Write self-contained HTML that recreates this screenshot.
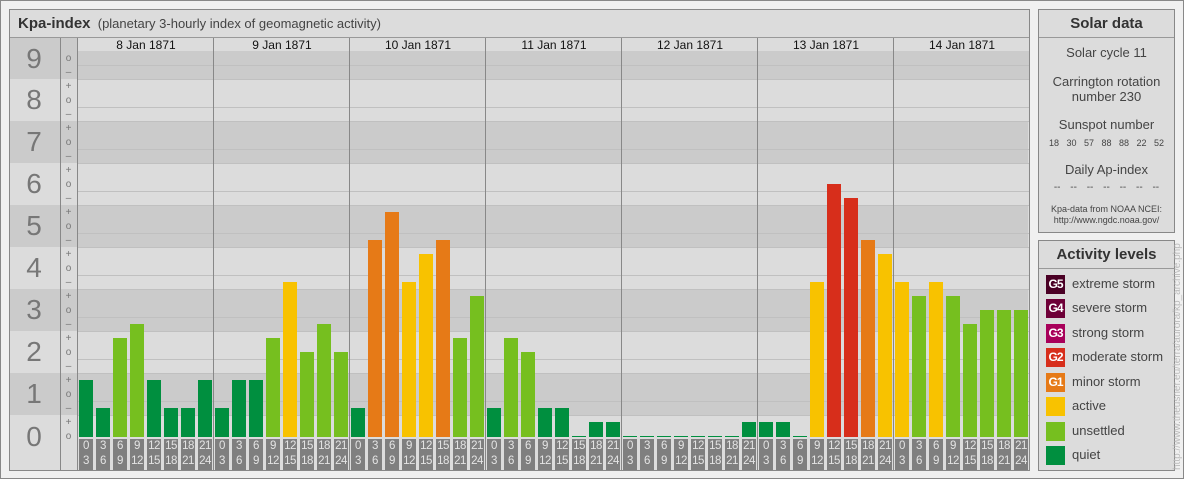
<!DOCTYPE html>
<html><head><meta charset="utf-8"><style>
*{margin:0;padding:0;box-sizing:border-box}
body{width:1184px;height:480px;background:#fff;font-family:"Liberation Sans",sans-serif;position:relative;overflow:hidden;color:#444}
div,span{position:absolute}
#outer{left:0;top:0;width:1184px;height:479px;border:1px solid #888;background:#f0f0f0}
#main{left:9px;top:9px;width:1021px;height:462px;border:1px solid #888;background:#dcdcdc;overflow:hidden}
#w{left:-1px;top:-1px;width:1021px;height:462px}
.t{left:8px;top:5px;font-size:13px;white-space:nowrap}
.band{left:0;width:1019px}
.dk{background:#cbcbcb}.lt{background:#dcdcdc}
.dig{left:0;width:50px;text-align:center;font-size:28px;color:#777;line-height:42px}
.sg{left:51px;width:17px;text-align:center;font-size:10px;color:#777;line-height:14px;height:14px}
.b{width:14px}
.q{background:#008f3f}.u{background:#76bf1f}.a{background:#f8c200}.g1{background:#e67a17}.g2{background:#d72e1b}
.lb{width:14px;height:31px;top:430px;background:#7f7f7f;color:#e4e4e4;font-size:11.5px;line-height:15px;text-align:center;letter-spacing:-0.5px}
.dh{top:29px;width:136px;text-align:center;font-size:12px;color:#111}
.vs{top:29px;width:1px;height:433px;background:#888}
.box{left:1038px;width:137px;border:1px solid #888;background:#dcdcdc}
.hd{left:0;width:135px;height:28px;border-bottom:1px solid #999;text-align:center;font-weight:bold;font-size:15px;line-height:28px;color:#333}
.c{left:0;width:135px;text-align:center;font-size:13px}
.sq{left:7px;width:19px;height:19px;color:#fff;font-size:12px;font-weight:bold;line-height:19px;text-align:center;letter-spacing:-1px}
.lt2{left:33px;font-size:13px;white-space:nowrap}
</style></head><body>
<div id="outer"></div>
<div id="main"><div id="w">
<div class="t" style="left:9px;top:6px"><b style="font-size:15px;color:#333">Kpa-index</b>&nbsp;&nbsp;(planetary 3-hourly index of geomagnetic activity)</div>
<div style="left:0;top:28px;width:1021px;height:1px;background:#999"></div>
<div class="band dk" style="top:29px;height:41px;width:1021px"></div>
<div class="band lt" style="top:70px;height:42px"></div>
<div class="band dk" style="top:112px;height:42px"></div>
<div class="band lt" style="top:154px;height:42px"></div>
<div class="band dk" style="top:196px;height:42px"></div>
<div class="band lt" style="top:238px;height:42px"></div>
<div class="band dk" style="top:280px;height:42px"></div>
<div class="band lt" style="top:322px;height:42px"></div>
<div class="band dk" style="top:364px;height:42px"></div>
<div class="band lt" style="top:406px;height:56px"></div>
<div style="left:68px;top:29px;width:953px;height:13px;background:#dcdcdc"></div>
<div style="top:29px;height:400px;background:repeating-linear-gradient(to bottom,transparent 0,transparent 27px,#c0c0c0 27px,#c0c0c0 28px,transparent 28px,transparent 41px,#c0c0c0 41px,#c0c0c0 42px);left:68px;width:953px"></div>
<div class="dig" style="top:29px">9</div><div class="dig" style="top:70px">8</div><div class="dig" style="top:112px">7</div><div class="dig" style="top:154px">6</div><div class="dig" style="top:196px">5</div><div class="dig" style="top:238px">4</div><div class="dig" style="top:280px">3</div><div class="dig" style="top:322px">2</div><div class="dig" style="top:364px">1</div><div class="dig" style="top:406px;line-height:44px">0</div>
<div style="left:51px;top:29px;width:1px;height:433px;background:#888"></div>
<div style="left:68px;top:29px;width:1px;height:433px;background:#888"></div>
<div class="sg" style="top:43px">o</div><div class="sg" style="top:57px">–</div>
<div class="sg" style="top:71px">+</div><div class="sg" style="top:85px">o</div><div class="sg" style="top:99px">–</div>
<div class="sg" style="top:113px">+</div><div class="sg" style="top:127px">o</div><div class="sg" style="top:141px">–</div>
<div class="sg" style="top:155px">+</div><div class="sg" style="top:169px">o</div><div class="sg" style="top:183px">–</div>
<div class="sg" style="top:197px">+</div><div class="sg" style="top:211px">o</div><div class="sg" style="top:225px">–</div>
<div class="sg" style="top:239px">+</div><div class="sg" style="top:253px">o</div><div class="sg" style="top:267px">–</div>
<div class="sg" style="top:281px">+</div><div class="sg" style="top:295px">o</div><div class="sg" style="top:309px">–</div>
<div class="sg" style="top:323px">+</div><div class="sg" style="top:337px">o</div><div class="sg" style="top:351px">–</div>
<div class="sg" style="top:365px">+</div><div class="sg" style="top:379px">o</div><div class="sg" style="top:393px">–</div>
<div class="sg" style="top:407px">+</div><div class="sg" style="top:421px">o</div>
<div style="left:69px;top:429px;width:952px;height:33px;background:#dcdcdc"></div>
<div class="dh" style="left:69px">8 Jan 1871</div><div class="dh" style="left:205px">9 Jan 1871</div><div class="dh" style="left:341px">10 Jan 1871</div><div class="dh" style="left:477px">11 Jan 1871</div><div class="dh" style="left:613px">12 Jan 1871</div><div class="dh" style="left:749px">13 Jan 1871</div><div class="dh" style="left:885px">14 Jan 1871</div>
<div class="vs" style="left:204px"></div><div class="vs" style="left:340px"></div><div class="vs" style="left:476px"></div><div class="vs" style="left:612px"></div><div class="vs" style="left:748px"></div><div class="vs" style="left:884px"></div>
<div class="b q" style="left:70px;top:371px;height:57px"></div><div class="b q" style="left:87px;top:399px;height:29px"></div><div class="b u" style="left:104px;top:329px;height:99px"></div><div class="b u" style="left:121px;top:315px;height:113px"></div><div class="b q" style="left:138px;top:371px;height:57px"></div><div class="b q" style="left:155px;top:399px;height:29px"></div><div class="b q" style="left:172px;top:399px;height:29px"></div><div class="b q" style="left:189px;top:371px;height:57px"></div>
<div class="b q" style="left:206px;top:399px;height:29px"></div><div class="b q" style="left:223px;top:371px;height:57px"></div><div class="b q" style="left:240px;top:371px;height:57px"></div><div class="b u" style="left:257px;top:329px;height:99px"></div><div class="b a" style="left:274px;top:273px;height:155px"></div><div class="b u" style="left:291px;top:343px;height:85px"></div><div class="b u" style="left:308px;top:315px;height:113px"></div><div class="b u" style="left:325px;top:343px;height:85px"></div>
<div class="b q" style="left:342px;top:399px;height:29px"></div><div class="b g1" style="left:359px;top:231px;height:197px"></div><div class="b g1" style="left:376px;top:203px;height:225px"></div><div class="b a" style="left:393px;top:273px;height:155px"></div><div class="b a" style="left:410px;top:245px;height:183px"></div><div class="b g1" style="left:427px;top:231px;height:197px"></div><div class="b u" style="left:444px;top:329px;height:99px"></div><div class="b u" style="left:461px;top:287px;height:141px"></div>
<div class="b q" style="left:478px;top:399px;height:29px"></div><div class="b u" style="left:495px;top:329px;height:99px"></div><div class="b u" style="left:512px;top:343px;height:85px"></div><div class="b q" style="left:529px;top:399px;height:29px"></div><div class="b q" style="left:546px;top:399px;height:29px"></div><div class="b q" style="left:563px;top:427px;height:1px"></div><div class="b q" style="left:580px;top:413px;height:15px"></div><div class="b q" style="left:597px;top:413px;height:15px"></div>
<div class="b q" style="left:614px;top:427px;height:1px"></div><div class="b q" style="left:631px;top:427px;height:1px"></div><div class="b q" style="left:648px;top:427px;height:1px"></div><div class="b q" style="left:665px;top:427px;height:1px"></div><div class="b q" style="left:682px;top:427px;height:1px"></div><div class="b q" style="left:699px;top:427px;height:1px"></div><div class="b q" style="left:716px;top:427px;height:1px"></div><div class="b q" style="left:733px;top:413px;height:15px"></div>
<div class="b q" style="left:750px;top:413px;height:15px"></div><div class="b q" style="left:767px;top:413px;height:15px"></div><div class="b q" style="left:784px;top:427px;height:1px"></div><div class="b a" style="left:801px;top:273px;height:155px"></div><div class="b g2" style="left:818px;top:175px;height:253px"></div><div class="b g2" style="left:835px;top:189px;height:239px"></div><div class="b g1" style="left:852px;top:231px;height:197px"></div><div class="b a" style="left:869px;top:245px;height:183px"></div>
<div class="b a" style="left:886px;top:273px;height:155px"></div><div class="b u" style="left:903px;top:287px;height:141px"></div><div class="b a" style="left:920px;top:273px;height:155px"></div><div class="b u" style="left:937px;top:287px;height:141px"></div><div class="b u" style="left:954px;top:315px;height:113px"></div><div class="b u" style="left:971px;top:301px;height:127px"></div><div class="b u" style="left:988px;top:301px;height:127px"></div><div class="b u" style="left:1005px;top:301px;height:127px"></div>
<div class="lb" style="left:70px">0<br>3</div><div class="lb" style="left:87px">3<br>6</div><div class="lb" style="left:104px">6<br>9</div><div class="lb" style="left:121px">9<br>12</div><div class="lb" style="left:138px">12<br>15</div><div class="lb" style="left:155px">15<br>18</div><div class="lb" style="left:172px">18<br>21</div><div class="lb" style="left:189px">21<br>24</div>
<div class="lb" style="left:206px">0<br>3</div><div class="lb" style="left:223px">3<br>6</div><div class="lb" style="left:240px">6<br>9</div><div class="lb" style="left:257px">9<br>12</div><div class="lb" style="left:274px">12<br>15</div><div class="lb" style="left:291px">15<br>18</div><div class="lb" style="left:308px">18<br>21</div><div class="lb" style="left:325px">21<br>24</div>
<div class="lb" style="left:342px">0<br>3</div><div class="lb" style="left:359px">3<br>6</div><div class="lb" style="left:376px">6<br>9</div><div class="lb" style="left:393px">9<br>12</div><div class="lb" style="left:410px">12<br>15</div><div class="lb" style="left:427px">15<br>18</div><div class="lb" style="left:444px">18<br>21</div><div class="lb" style="left:461px">21<br>24</div>
<div class="lb" style="left:478px">0<br>3</div><div class="lb" style="left:495px">3<br>6</div><div class="lb" style="left:512px">6<br>9</div><div class="lb" style="left:529px">9<br>12</div><div class="lb" style="left:546px">12<br>15</div><div class="lb" style="left:563px">15<br>18</div><div class="lb" style="left:580px">18<br>21</div><div class="lb" style="left:597px">21<br>24</div>
<div class="lb" style="left:614px">0<br>3</div><div class="lb" style="left:631px">3<br>6</div><div class="lb" style="left:648px">6<br>9</div><div class="lb" style="left:665px">9<br>12</div><div class="lb" style="left:682px">12<br>15</div><div class="lb" style="left:699px">15<br>18</div><div class="lb" style="left:716px">18<br>21</div><div class="lb" style="left:733px">21<br>24</div>
<div class="lb" style="left:750px">0<br>3</div><div class="lb" style="left:767px">3<br>6</div><div class="lb" style="left:784px">6<br>9</div><div class="lb" style="left:801px">9<br>12</div><div class="lb" style="left:818px">12<br>15</div><div class="lb" style="left:835px">15<br>18</div><div class="lb" style="left:852px">18<br>21</div><div class="lb" style="left:869px">21<br>24</div>
<div class="lb" style="left:886px">0<br>3</div><div class="lb" style="left:903px">3<br>6</div><div class="lb" style="left:920px">6<br>9</div><div class="lb" style="left:937px">9<br>12</div><div class="lb" style="left:954px">12<br>15</div><div class="lb" style="left:971px">15<br>18</div><div class="lb" style="left:988px">18<br>21</div><div class="lb" style="left:1005px">21<br>24</div>
</div></div>

<div class="box" style="top:9px;height:224px">
<div class="hd">Solar data</div>
<div class="c" style="top:35px">Solar cycle 11</div>
<div class="c" style="top:64px;line-height:15px">Carrington rotation<br>number 230</div>
<div class="c" style="top:107px">Sunspot number</div>
<div class="c" style="top:128px;font-size:9px;word-spacing:5px">18 30 57 88 88 22 52</div>
<div class="c" style="top:152px">Daily Ap-index</div>
<div class="c" style="top:172px;font-size:10px;word-spacing:7px">-- -- -- -- -- -- --</div>
<div class="c" style="top:194px;font-size:9px;line-height:11px">Kpa-data from NOAA NCEI:<br>http://www.ngdc.noaa.gov/</div>
</div>

<div class="box" style="top:240px;height:231px">
<div class="hd">Activity levels</div>
<div class="sq" style="top:34px;background:#4a0025">G5</div><div class="lt2" style="top:35px">extreme storm</div>
<div class="sq" style="top:58px;background:#6e0038">G4</div><div class="lt2" style="top:59px">severe storm</div>
<div class="sq" style="top:83px;background:#a8005a">G3</div><div class="lt2" style="top:84px">strong storm</div>
<div class="sq" style="top:107px;background:#d72e1b">G2</div><div class="lt2" style="top:108px">moderate storm</div>
<div class="sq" style="top:132px;background:#e67a17">G1</div><div class="lt2" style="top:133px">minor storm</div>
<div class="sq" style="top:156px;background:#f8c200"></div><div class="lt2" style="top:157px">active</div>
<div class="sq" style="top:181px;background:#76bf1f"></div><div class="lt2" style="top:182px">unsettled</div>
<div class="sq" style="top:205px;background:#008f3f"></div><div class="lt2" style="top:206px">quiet</div>
</div>

<div style="left:1068px;top:354px;width:220px;height:12px;transform:rotate(-90deg);font-size:10px;color:#bbb;white-space:nowrap;text-align:center;line-height:12px">http://www.theusner.eu/terra/aurora/kp_archive.php</div>
</body></html>
